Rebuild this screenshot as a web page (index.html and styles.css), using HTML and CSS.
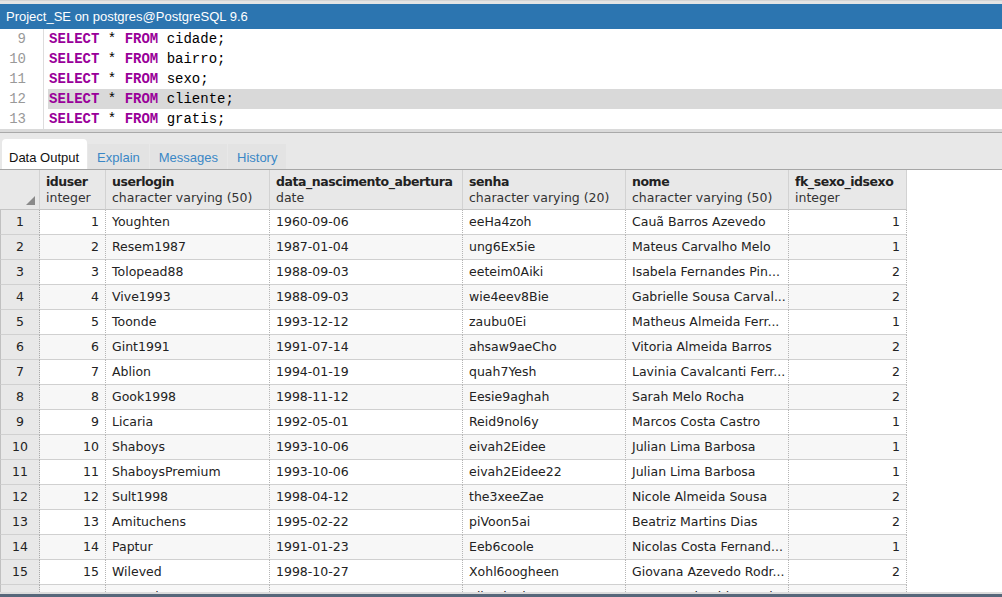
FILE: index.html
```html
<!DOCTYPE html>
<html>
<head>
<meta charset="utf-8">
<link rel="stylesheet" href="styles.css">
</head>
<body>
<div class="app">
  <div class="topstrip"></div>
  <div class="titlebar">Project_SE on postgres@PostgreSQL 9.6</div>
  <div class="editor">
    <div class="line"><span class="ln">9</span><span class="code"><b>SELECT</b> * <b>FROM</b> cidade;</span></div>
    <div class="line"><span class="ln">10</span><span class="code"><b>SELECT</b> * <b>FROM</b> bairro;</span></div>
    <div class="line"><span class="ln">11</span><span class="code"><b>SELECT</b> * <b>FROM</b> sexo;</span></div>
    <div class="line active"><span class="ln">12</span><span class="code"><b>SELECT</b> * <b>FROM</b> cliente;</span></div>
    <div class="line"><span class="ln">13</span><span class="code"><b>SELECT</b> * <b>FROM</b> gratis;</span></div>
  </div>
  <div class="sep"></div>
  <div class="tabs">
    <div class="tab active">Data Output</div>
    <div class="tab">Explain</div>
    <div class="tab">Messages</div>
    <div class="tab">History</div>
  </div>
  <div class="gridwrap">
    <table class="grid">
      <thead>
        <tr>
          <th class="corner w0"><svg width="9" height="9" viewBox="0 0 9 9"><polygon points="9,0 9,9 0,9" fill="#8a8a8a"/></svg></th>
          <th class="w1"><span class="cn">iduser</span><span class="ct">integer</span></th>
          <th class="w2"><span class="cn">userlogin</span><span class="ct">character varying (50)</span></th>
          <th class="w3"><span class="cn">data_nascimento_abertura</span><span class="ct">date</span></th>
          <th class="w4"><span class="cn">senha</span><span class="ct">character varying (20)</span></th>
          <th class="w5"><span class="cn">nome</span><span class="ct">character varying (50)</span></th>
          <th class="w6"><span class="cn">fk_sexo_idsexo</span><span class="ct">integer</span></th>
        </tr>
      </thead>
      <tbody>
        <tr><td class="rn">1</td><td class="num">1</td><td>Youghten</td><td>1960-09-06</td><td>eeHa4zoh</td><td class="nm">Cauã Barros Azevedo</td><td class="num">1</td></tr>
        <tr><td class="rn">2</td><td class="num">2</td><td>Resem1987</td><td>1987-01-04</td><td>ung6Ex5ie</td><td class="nm">Mateus Carvalho Melo</td><td class="num">1</td></tr>
        <tr><td class="rn">3</td><td class="num">3</td><td>Tolopead88</td><td>1988-09-03</td><td>eeteim0Aiki</td><td class="nm">Isabela Fernandes Pin...</td><td class="num">2</td></tr>
        <tr><td class="rn">4</td><td class="num">4</td><td>Vive1993</td><td>1988-09-03</td><td>wie4eev8Bie</td><td class="nm">Gabrielle Sousa Carval...</td><td class="num">2</td></tr>
        <tr><td class="rn">5</td><td class="num">5</td><td>Toonde</td><td>1993-12-12</td><td>zaubu0Ei</td><td class="nm">Matheus Almeida Ferr...</td><td class="num">1</td></tr>
        <tr><td class="rn">6</td><td class="num">6</td><td>Gint1991</td><td>1991-07-14</td><td>ahsaw9aeCho</td><td class="nm">Vitoria Almeida Barros</td><td class="num">2</td></tr>
        <tr><td class="rn">7</td><td class="num">7</td><td>Ablion</td><td>1994-01-19</td><td>quah7Yesh</td><td class="nm">Lavinia Cavalcanti Ferr...</td><td class="num">2</td></tr>
        <tr><td class="rn">8</td><td class="num">8</td><td>Gook1998</td><td>1998-11-12</td><td>Eesie9aghah</td><td class="nm">Sarah Melo Rocha</td><td class="num">2</td></tr>
        <tr><td class="rn">9</td><td class="num">9</td><td>Licaria</td><td>1992-05-01</td><td>Reid9nol6y</td><td class="nm">Marcos Costa Castro</td><td class="num">1</td></tr>
        <tr><td class="rn">10</td><td class="num">10</td><td>Shaboys</td><td>1993-10-06</td><td>eivah2Eidee</td><td class="nm">Julian Lima Barbosa</td><td class="num">1</td></tr>
        <tr><td class="rn">11</td><td class="num">11</td><td>ShaboysPremium</td><td>1993-10-06</td><td>eivah2Eidee22</td><td class="nm">Julian Lima Barbosa</td><td class="num">1</td></tr>
        <tr><td class="rn">12</td><td class="num">12</td><td>Sult1998</td><td>1998-04-12</td><td>the3xeeZae</td><td class="nm">Nicole Almeida Sousa</td><td class="num">2</td></tr>
        <tr><td class="rn">13</td><td class="num">13</td><td>Amituchens</td><td>1995-02-22</td><td>piVoon5ai</td><td class="nm">Beatriz Martins Dias</td><td class="num">2</td></tr>
        <tr><td class="rn">14</td><td class="num">14</td><td>Paptur</td><td>1991-01-23</td><td>Eeb6coole</td><td class="nm">Nicolas Costa Fernand...</td><td class="num">1</td></tr>
        <tr><td class="rn">15</td><td class="num">15</td><td>Wileved</td><td>1998-10-27</td><td>Xohl6oogheen</td><td class="nm">Giovana Azevedo Rodr...</td><td class="num">2</td></tr>
        <tr><td class="rn">16</td><td class="num">16</td><td>Hoysed</td><td>1996-03-16</td><td>Eik6ai3oi3</td><td class="nm">Estevan Almeida Marti...</td><td class="num">1</td></tr>
      </tbody>
    </table>
  </div>
  <div class="bottom"></div>
</div>
</body>
</html>
```

FILE: styles.css
```css
html, body {
  margin: 0;
  padding: 0;
  background: #ffffff;
  overflow: hidden;
}
.app {
  width: 1002px;
  height: 597px;
  display: flex;
  flex-direction: column;
  overflow: hidden;
}
.topstrip {
  height: 4px;
  background: #e4e4e4;
  border-top: 1px solid #d4d4d4;
  box-sizing: border-box;
  flex: none;
}
.titlebar {
  height: 25px;
  background: #2c75b0;
  color: #ffffff;
  font-family: "Liberation Sans", Arial, sans-serif;
  font-size: 13px;
  line-height: 25px;
  padding-left: 6px;
  white-space: nowrap;
  flex: none;
}
.editor {
  background: #ffffff;
  height: 100px;
  flex: none;
}
.line {
  display: flex;
  height: 20px;
  line-height: 20px;
  font-family: "Liberation Mono", "Courier New", monospace;
  font-size: 14px;
}
.ln {
  width: 44px;
  box-sizing: border-box;
  border-right: 1px solid #dddddd;
  text-align: right;
  padding-right: 17px;
  color: #999999;
  flex: none;
}
.code {
  flex: 1;
  margin-left: 4px;
  padding-left: 1px;
  color: #000000;
  white-space: pre;
}
.code b {
  color: #990099;
  font-weight: bold;
}
.line.active .code {
  background: #d9d9d9;
}
.sep {
  height: 4px;
  background: #dadada;
  border-bottom: 1px solid #a9a9a9;
  box-sizing: border-box;
  flex: none;
}
.tabs {
  height: 36px;
  box-sizing: border-box;
  background: #e8e8e8;
  display: flex;
  align-items: flex-end;
  padding-left: 2px;
  font-family: "Liberation Sans", Arial, sans-serif;
  font-size: 13px;
  flex: none;
}
.tab {
  height: 25px;
  box-sizing: border-box;
  padding: 6px 9px 0 9px;
  line-height: 16px;
  color: #3a87c6;
  background: #e3e3e3;
  margin-right: 1px;
}
.tab.active {
  height: 30px;
  padding-top: 11px;
  background: #ffffff;
  color: #111111;
  border-radius: 4px 4px 0 0;
  padding-left: 7px;
  padding-right: 8px;
}
.gridwrap {
  flex: 1;
  overflow: hidden;
  background: #ffffff;
  border-top: 1px solid #a6a6a6;
}
.grid {
  border-collapse: separate;
  border-spacing: 0;
  table-layout: fixed;
  width: 907px;
  font-family: "DejaVu Sans", Verdana, sans-serif;
  font-size: 12.5px;
  color: #222222;
}
.grid th {
  height: 40px;
  box-sizing: border-box;
  background: #e8e8e8;
  border-right: 1px solid #d2d2d2;
  border-bottom: 1px solid #c4c4c4;
  text-align: left;
  vertical-align: middle;
  padding: 0 6px;
  font-weight: normal;
  white-space: nowrap;
  overflow: hidden;
}
.grid th .cn {
  display: block;
  font-weight: bold;
  line-height: 16px;
  letter-spacing: -0.45px;
}
.grid th .ct {
  display: block;
  line-height: 16px;
  color: #333333;
}
.grid th.corner {
  text-align: right;
  vertical-align: bottom;
  padding: 0 4px 4px 0;
  line-height: 0;
}
.w0 { width: 40px; }
.w1 { width: 66px; }
.w2 { width: 164px; }
.w3 { width: 193px; }
.w4 { width: 163px; }
.w5 { width: 163px; }
.w6 { width: 118px; }
.grid td {
  height: 25px;
  box-sizing: border-box;
  padding: 0 6px;
  border-right: 1px dotted #b4b4b4;
  border-bottom: 1px solid #d0d0d0;
  white-space: nowrap;
  overflow: hidden;
  line-height: 24px;
}
.grid td.nm {
  padding-right: 2px;
}
.grid tbody tr:nth-child(even) td {
  background: #f7f7f7;
}
.grid td.num {
  text-align: right;
}
.grid td.rn,
.grid tbody tr:nth-child(even) td.rn {
  background: #e8e8e8;
  text-align: center;
  border-left: 1px solid #c0c0c0;
  border-right: 1px dotted #a8a8a8;
  padding: 0;
}
.bottom {
  height: 5px;
  background: #dcdcdc;
  border-bottom: 3px solid #56677a;
  box-sizing: border-box;
  flex: none;
}
```
